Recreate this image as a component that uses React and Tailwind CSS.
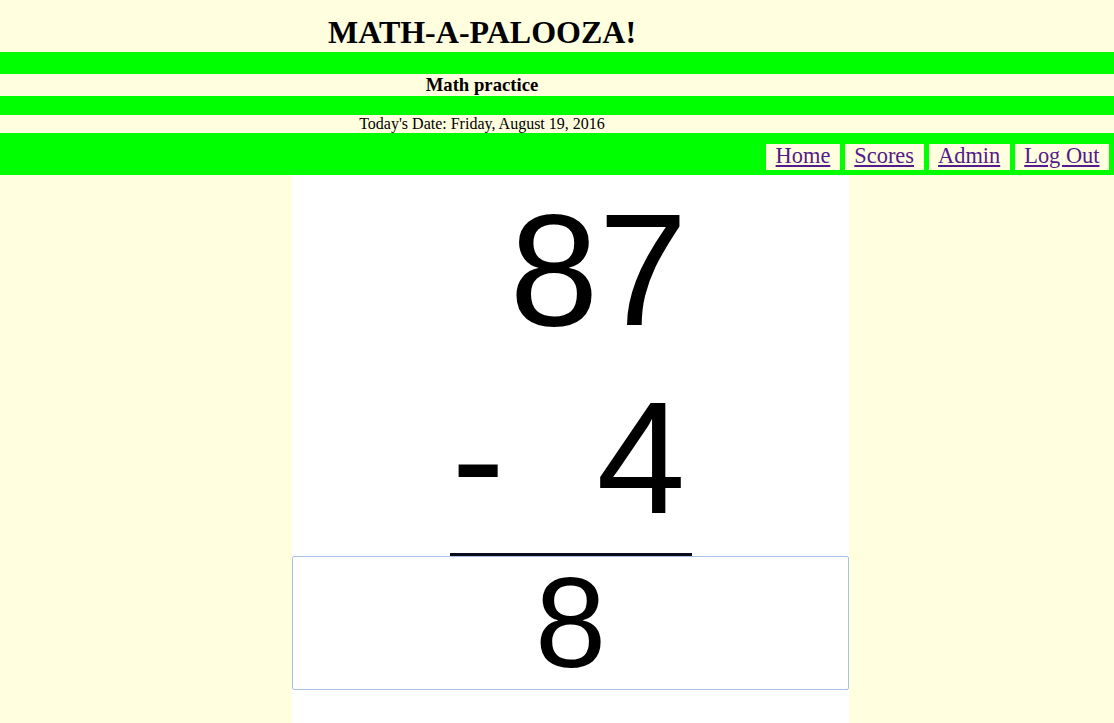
import React from "react";

const links = ["Home", "Scores", "Admin", "Log Out"];

function Header() {
    return (
        <div className="font-['Liberation_Serif',serif] text-black">
            <div className="w-[964px] h-[52px] pt-[16px] text-center text-[32px] leading-[32px] font-bold">
                MATH-A-PALOOZA!
            </div>
            <div className="h-[22px] bg-[#00ff00]" />
            <div className="w-[964px] h-[22px] text-center text-[18.72px] leading-[22px] font-bold">
                Math practice
            </div>
            <div className="h-[19px] bg-[#00ff00]" />
            <div className="w-[964px] h-[18px] text-center text-[16px] leading-[18px]">
                Today's Date: Friday, August 19, 2016
            </div>
            <nav className="h-[42px] bg-[#00ff00] flex justify-end items-end gap-[5px] pb-[5px] pr-[5px]">
                {links.map((l) => (
                    <a
                        key={l}
                        href="#"
                        className="h-[26px] px-[9.5px] bg-[#ffffe0] text-[22.4px] leading-[24px] text-[#551a8b] underline"
                    >
                        {l}
                    </a>
                ))}
            </nav>
        </div>
    );
}

export default function App() {
    return (
        <div className="min-h-[723px] bg-[#ffffe0] flex flex-col">
            <Header />
            <div className="flex flex-1">
                <div className="w-[292px] shrink-0" />
                <main className="w-[557px] bg-white flex flex-col items-center pt-[3px] pb-[40px] font-['Liberation_Sans',Arial,sans-serif] text-black">
                    <div className="w-[242px] flex flex-col gap-[4px]">
                        <div className="h-[184px] text-[160px] leading-[184px] text-right pr-[4px]">87</div>
                        <div className="h-[184px] text-[160px] leading-[184px] flex justify-between pl-[2px] pr-[6px]">
                            <span>-</span>
                            <span>4</span>
                        </div>
                    </div>
                    <div className="w-[242px] h-[3px] mt-[3px] bg-[#0b0b1e]" />
                    <div className="w-full h-[134px] border border-[#a8c1e4] rounded-[2px] text-center text-[128px] leading-[132px]">
                        8
                    </div>
                </main>
            </div>
        </div>
    );
}
